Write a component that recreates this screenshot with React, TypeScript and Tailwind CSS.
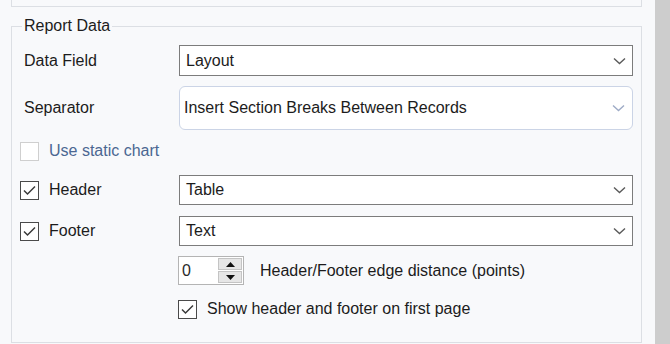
import React from 'react';

const font = { fontFamily: '"Liberation Sans", Arial, sans-serif' };

const Chevron = ({ color = '#555' }: { color?: string }) => (
  <svg width="13" height="8" viewBox="0 0 13 8" fill="none">
    <polyline points="1,1.5 6.5,6.5 12,1.5" stroke={color} strokeWidth="1.4" />
  </svg>
);

const Check = () => (
  <svg width="15" height="15" viewBox="0 0 15 15" fill="none">
    <polyline points="2,7.5 5.5,11 13,3.5" stroke="#3a3a3a" strokeWidth="1.5" />
  </svg>
);

const Dropdown = ({ value, h = 'h-[30px]' }: { value: string; h?: string }) => (
  <div className={`w-[454px] ${h} bg-white border border-[#7c7c7c] flex items-center justify-between pl-[6px] pr-[6px] text-[16px] text-[#1c1c1c]`}>
    <span>{value}</span>
    <Chevron color="#5a5a5a" />
  </div>
);

const CheckBox = ({ checked, disabled }: { checked?: boolean; disabled?: boolean }) => (
  <div
    className={`w-[19px] h-[19px] bg-white border flex items-center justify-center shrink-0 ${
      disabled ? 'border-[#cfcfcf]' : 'border-[#4a4a4a]'
    }`}
  >
    {checked && <Check />}
  </div>
);

export default function App() {
  return (
    <div className="w-[670px] h-[344px] bg-[#f8f9fb] flex overflow-hidden text-[#1c1c1c]" style={font}>
      <div className="w-[655px] flex flex-col">
        {/* 上一个分组的底边 */}
        <div className="ml-[11px] w-[631px] h-[7px] border-x border-b border-[#dcdfe4]" />

        <fieldset className="ml-[11px] mt-[10px] w-[631px] h-[326px] border border-[#dcdfe4] flex flex-col">
          <legend className="ml-[10px] px-[2px] text-[16px] leading-[18px]">Report Data</legend>

          {/* Data Field */}
          <div className="flex items-center mt-[10px]">
            <span className="w-[167px] pl-[12px] text-[16px]">Data Field</span>
            <Dropdown value="Layout" h="h-[31px]" />
          </div>

          {/* Separator */}
          <div className="flex items-center mt-[10px]">
            <span className="w-[167px] pl-[12px] text-[16px]">Separator</span>
            <div className="w-[454px] h-[44px] bg-white border border-[#cbd4e6] rounded-[6px] flex items-center justify-between pl-[4px] pr-[7px] text-[16px]">
              <span>Insert Section Breaks Between Records</span>
              <Chevron color="#9eabc6" />
            </div>
          </div>

          {/* Use static chart */}
          <div className="flex items-center mt-[12px] pl-[8px] h-[18px]">
            <CheckBox disabled />
            <span className="ml-[10px] text-[16px] text-[#4b6792]">Use static chart</span>
          </div>

          {/* Header */}
          <div className="flex items-center mt-[15px]">
            <div className="w-[167px] flex items-center pl-[8px]">
              <CheckBox checked />
              <span className="ml-[10px] text-[16px]">Header</span>
            </div>
            <Dropdown value="Table" />
          </div>

          {/* Footer */}
          <div className="flex items-center mt-[11px]">
            <div className="w-[167px] flex items-center pl-[8px]">
              <CheckBox checked />
              <span className="ml-[10px] text-[16px]">Footer</span>
            </div>
            <Dropdown value="Text" />
          </div>

          {/* 边距 */}
          <div className="flex items-center mt-[10px] pl-[166px]">
            <div className="w-[66px] h-[29px] bg-white border border-[#b4b4b4] flex items-center">
              <span className="flex-1 pl-[3px] text-[16px] text-[#2a2a2a]">0</span>
              <div className="w-[24px] h-[25px] mr-[1px] flex flex-col gap-[1px]">
                <div className="flex-1 bg-[#e6e6e6] border border-[#c4c4c4] flex items-center justify-center">
                  <svg width="9" height="5" viewBox="0 0 9 5"><polygon points="0,5 4.5,0 9,5" fill="#111" /></svg>
                </div>
                <div className="flex-1 bg-[#e6e6e6] border border-[#c4c4c4] flex items-center justify-center">
                  <svg width="9" height="5" viewBox="0 0 9 5"><polygon points="0,0 4.5,5 9,0" fill="#111" /></svg>
                </div>
              </div>
            </div>
            <span className="ml-[16px] text-[16px]">Header/Footer edge distance (points)</span>
          </div>

          {/* Show header and footer */}
          <div className="flex items-center mt-[12px] pl-[166px]">
            <CheckBox checked />
            <span className="ml-[10px] text-[16px]">Show header and footer on first page</span>
          </div>
        </fieldset>
      </div>
      <div className="w-[15px] bg-[#cdcdcd]" />
    </div>
  );
}
